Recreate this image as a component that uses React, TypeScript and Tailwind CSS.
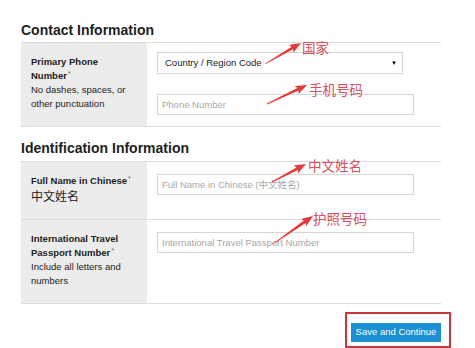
type Pt = [number, number];

// red annotation arrows (overlay)
function arrowPoints(t: Pt, p: Pt) {
  const dx = p[0] - t[0];
  const dy = p[1] - t[1];
  const len = Math.hypot(dx, dy);
  const ux = dx / len;
  const uy = dy / len;
  const nx = -uy;
  const ny = ux;
  const b: Pt = [p[0] - ux * 10, p[1] - uy * 10];
  const pts: Pt[] = [
    [t[0] + nx * 0.4, t[1] + ny * 0.4],
    [b[0] + nx * 1.5, b[1] + ny * 1.5],
    [b[0] - ux * 1.5 + nx * 4.5, b[1] - uy * 1.5 + ny * 4.5],
    p,
    [b[0] - ux * 1.5 - nx * 4.5, b[1] - uy * 1.5 - ny * 4.5],
    [b[0] - nx * 1.5, b[1] - ny * 1.5],
    [t[0] - nx * 0.4, t[1] - ny * 0.4],
  ];
  return pts.map((q) => `${q[0].toFixed(1)},${q[1].toFixed(1)}`).join(" ");
}

const arrows: [Pt, Pt][] = [
  [[265, 64], [301, 43]],
  [[267, 104], [307, 85]],
  [[272, 182], [306, 164]],
  [[273, 244], [313, 216]],
];

const notes = [
  { text: "国家", cls: "left-[302px] top-[39px]" },
  { text: "手机号码", cls: "left-[309px] top-[81px]" },
  { text: "中文姓名", cls: "left-[308px] top-[157px]" },
  { text: "护照号码", cls: "left-[313px] top-[210px]" },
];

function Star() {
  return <span className="relative -top-[3px] ml-[1px] text-[7px] leading-none font-normal text-[#666]">*</span>;
}

function TextInput({ placeholder, w = "w-[257px]" }: { placeholder: string; w?: string }) {
  return (
    <input
      placeholder={placeholder}
      className={`${w} h-[21px] border border-[#d6d6d6] bg-white px-[4px] text-[9.5px] text-[#333] placeholder:text-[#a8a8a8] outline-none`}
    />
  );
}

export default function App() {
  return (
    <div
      className="relative w-[475px] h-[348px] overflow-hidden bg-white text-[#222]"
      style={{ fontFamily: '"Liberation Sans", Arial, "Noto Sans CJK SC", sans-serif' }}
    >
      <div className="ml-[21px] w-[420px]">
        <h2 className="pt-[22px] mb-[4px] text-[14px] leading-[16px] font-bold text-[#1e1e1e]">
          Contact Information
        </h2>
        <div className="border-t border-[#dcdcdc]">
          <div className="flex border-b border-[#dcdcdc]">
            <div className="w-[126px] shrink-0 bg-[#ececec] pl-[10px] pr-[8px] pt-[12px] pb-[15px] text-[9.5px] leading-[14px] text-[#222]">
              <div className="font-bold">
                Primary Phone Number<Star />
              </div>
              <div>No dashes, spaces, or other punctuation</div>
            </div>
            <div className="flex-1 pl-[10px] pt-[9px]">
              <div className="flex h-[22px] w-[246px] items-center justify-between border border-[#d6d6d6] bg-white pl-[7px] pr-[5px] text-[9.5px] text-[#222]">
                <span>Country / Region Code</span>
                <span className="text-[6px] text-black">▼</span>
              </div>
              <div className="mt-[17px]">
                <TextInput placeholder="Phone Number" />
              </div>
            </div>
          </div>
        </div>

        <h2 className="pt-[13px] mb-[5px] text-[14px] leading-[16px] font-bold text-[#1e1e1e]">
          Identification Information
        </h2>
        <div className="border-t border-[#dcdcdc]">
          <div className="flex border-b border-[#dcdcdc]">
            <div className="w-[126px] shrink-0 bg-[#ececec] pl-[10px] pr-[8px] pt-[12px] pb-[13px] text-[9.5px] leading-[14px]">
              <div className="font-bold">
                Full Name in Chinese<Star />
              </div>
              <div className="text-[12px] leading-[18px]">中文姓名</div>
            </div>
            <div className="flex-1 pl-[10px] pt-[9px]">
              <TextInput placeholder="Full Name in Chinese (中文姓名)" />
            </div>
          </div>
          <div className="flex border-b border-[#dcdcdc]">
            <div className="w-[126px] shrink-0 bg-[#ececec] pl-[10px] pr-[8px] pt-[12px] pb-[15px] text-[9.5px] leading-[14px]">
              <div className="font-bold">
                International Travel Passport Number<Star />
              </div>
              <div>Include all letters and numbers</div>
            </div>
            <div className="flex-1 pl-[10px] pt-[9px]">
              <TextInput placeholder="International Travel Passport Number" />
            </div>
          </div>
        </div>

        <div className="mt-[14px] flex justify-end">
          <div className="relative">
            <button className="h-[19px] w-[90px] bg-[#1a8fd2] text-[9.5px] text-white">
              Save and Continue
            </button>
            <div className="absolute -left-[6px] -top-[6px] -right-[10px] -bottom-[6px] border-2 border-[#c2383c]" />
          </div>
        </div>
      </div>

      <svg className="pointer-events-none absolute inset-0" width="475" height="348" viewBox="0 0 475 348">
        {arrows.map(([t, p], i) => (
          <polygon key={i} points={arrowPoints(t, p)} fill="#e63a36" />
        ))}
      </svg>
      {notes.map((n) => (
        <span
          key={n.text}
          className={`absolute ${n.cls} text-[13.5px] leading-[16px] text-[#d4505a]`}
          style={{ fontFamily: '"Noto Sans CJK SC", sans-serif' }}
        >
          {n.text}
        </span>
      ))}
    </div>
  );
}
